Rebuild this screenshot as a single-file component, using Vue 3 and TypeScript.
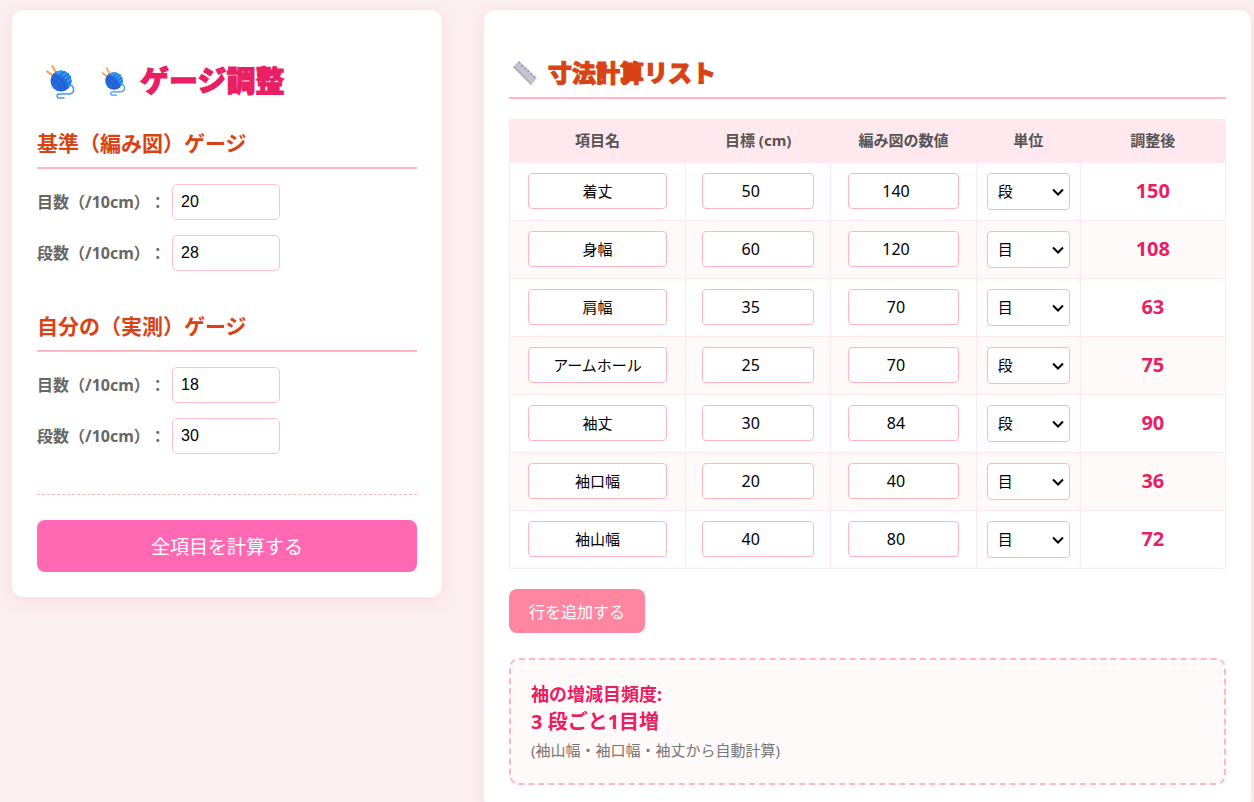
<script setup lang="ts">
import { computed, reactive, ref } from 'vue'

type Unit = '段' | '目'

interface Row {
  name: string
  target: number
  pattern: number
  unit: Unit
  result: number
}

const base = reactive({ stitches: 20, rows: 28 })
const own = reactive({ stitches: 18, rows: 30 })

const rows = ref<Row[]>([
  { name: '着丈', target: 50, pattern: 140, unit: '段', result: 150 },
  { name: '身幅', target: 60, pattern: 120, unit: '目', result: 108 },
  { name: '肩幅', target: 35, pattern: 70, unit: '目', result: 63 },
  { name: 'アームホール', target: 25, pattern: 70, unit: '段', result: 75 },
  { name: '袖丈', target: 30, pattern: 84, unit: '段', result: 90 },
  { name: '袖口幅', target: 20, pattern: 40, unit: '目', result: 36 },
  { name: '袖山幅', target: 40, pattern: 80, unit: '目', result: 72 },
])

function calculateAll(): void {
  for (const row of rows.value) {
    const ratio = row.unit === '段' ? own.rows / base.rows : own.stitches / base.stitches
    row.result = Math.round(row.pattern * ratio)
  }
}

function addRow(): void {
  rows.value.push({ name: '', target: 0, pattern: 0, unit: '目', result: 0 })
}

const sleeveInterval = computed<number>(() => {
  const find = (name: string): number => rows.value.find((r) => r.name === name)?.result ?? 0
  const change = (find('袖山幅') - find('袖口幅')) / 2
  return change > 0 ? Math.ceil(find('袖丈') / 2 / change) : 0
})
</script>

<template>
  <main class="page">
    <section class="card">
      <h1 class="title">
        <svg v-for="size in ['large', 'small']" :key="size" class="yarn" :class="size" viewBox="0 0 30 36" aria-hidden="true">
          <path d="M1.200 8.500 9 14M6.500 3 11 12" stroke="#f3a765" stroke-width="2.200" stroke-linecap="round" />
          <path d="M23.500 21.500C29 23.500 29 30.500 23 31H13c-2.500 0-2.500 4 0 4h5" fill="none" stroke="#4396e8" stroke-width="1.500" stroke-linecap="round" />
          <circle cx="15" cy="18" r="10.500" fill="#2569dc" />
          <path d="M10 9c6-4 14 0 15.500 8 0 3-1 5-2.500 7C21 17 17 12 9 10.500z" fill="#2f98f2" />
          <path d="m14 12 5-3.500M17 14.500l6-4M19.500 17.500l5.500-4M21.500 21l4-3" stroke="#1d6bd2" stroke-width="1.200" />
          <path d="M6.500 12.500c7 1 12 7 13 14.500M5 16c6 1 9.500 6 10.500 12" fill="none" stroke="#1f57c4" stroke-width="1" />
        </svg>
        <span>ゲージ調整</span>
      </h1>

      <h3 class="group-title">基準（編み図）ゲージ</h3>
      <div class="field">
        <label for="base-stitches">目数（/10cm）：</label>
        <input id="base-stitches" v-model.number="base.stitches" type="number" />
      </div>
      <div class="field">
        <label for="base-rows">段数（/10cm）：</label>
        <input id="base-rows" v-model.number="base.rows" type="number" />
      </div>

      <h3 class="group-title second">自分の（実測）ゲージ</h3>
      <div class="field">
        <label for="own-stitches">目数（/10cm）：</label>
        <input id="own-stitches" v-model.number="own.stitches" type="number" />
      </div>
      <div class="field">
        <label for="own-rows">段数（/10cm）：</label>
        <input id="own-rows" v-model.number="own.rows" type="number" />
      </div>

      <hr class="divider" />
      <button class="calculate" type="button" @click="calculateAll">全項目を計算する</button>
    </section>

    <section class="card">
      <h2 class="list-title">
        <svg class="ruler" viewBox="0 0 26 26" aria-hidden="true">
          <path d="M1 7 7 1 25 18 19 25z" fill="#c6c4cc" />
          <path d="M1 7 19 25l1-1.200L2.200 5.800z" fill="#b0adb9" />
          <path d="m8 2-1.300 1.300M11 5 9.500 6.500M14 7.800l-1.300 1.300M17 10.500l-1.500 1.500M20 13.300l-1.300 1.300M23 16.200l-1.500 1.500" stroke="#9f80dc" stroke-width="1.500" />
        </svg>
        <span>寸法計算リスト</span>
      </h2>

      <table class="sizes">
        <colgroup>
          <col class="col-name" />
          <col />
          <col />
          <col class="col-unit" />
          <col />
        </colgroup>
        <thead>
          <tr>
            <th scope="col">項目名</th>
            <th scope="col">目標 (cm)</th>
            <th scope="col">編み図の数値</th>
            <th scope="col">単位</th>
            <th scope="col">調整後</th>
          </tr>
        </thead>
        <tbody>
          <tr v-for="(row, i) in rows" :key="i">
            <td><input v-model="row.name" type="text" aria-label="項目名" /></td>
            <td><input v-model.number="row.target" type="number" aria-label="目標 (cm)" /></td>
            <td><input v-model.number="row.pattern" type="number" aria-label="編み図の数値" /></td>
            <td>
              <div class="unit">
                <select v-model="row.unit" aria-label="単位">
                  <option>段</option>
                  <option>目</option>
                </select>
                <svg viewBox="0 0 12 8" aria-hidden="true">
                  <path d="m1 1.500 5 5 5-5" fill="none" stroke="#000" stroke-width="2" />
                </svg>
              </div>
            </td>
            <td class="result">{{ row.result }}</td>
          </tr>
        </tbody>
      </table>

      <button class="add" type="button" @click="addRow">行を追加する</button>

      <div class="sleeve">
        <p class="sleeve-label">袖の増減目頻度:</p>
        <p class="sleeve-value">{{ sleeveInterval }} 段ごと1目増</p>
        <p class="sleeve-note">(袖山幅・袖口幅・袖丈から自動計算)</p>
      </div>
    </section>
  </main>
</template>

<style>
body {
  margin: 0;
  background: #fbeff1;
}
</style>

<style scoped>
.page {
  display: grid;
  grid-template-columns: 432px minmax(0, 1fr);
  align-items: start;
  gap: 40px;
  padding: 9px 2px 20px 11px;
  font-family: 'Noto Sans', 'Noto Sans CJK JP', sans-serif;
  font-size: 16px;
  text-spacing-trim: space-all;
  color: #555;
}

.page * {
  box-sizing: border-box;
}

.card {
  padding: 25px;
  background: #fff;
  border: 1px solid #ffe4e8;
  border-radius: 12px;
  box-shadow: 0 4px 15px rgba(255, 182, 193, 0.3);
}

.title {
  display: flex;
  align-items: center;
  margin: 24px 0 23px;
  padding-left: 9px;
  font-size: 29px;
  font-weight: 900;
  line-height: 44px;
  color: #e91e63;
}

.title span,
.list-title span {
  -webkit-text-stroke: 1px currentColor;
}

.yarn {
  flex: none;
}

.yarn.large {
  width: 30px;
  height: 36px;
  margin-right: 25px;
}

.yarn.small {
  width: 26px;
  height: 30px;
  margin-right: 13px;
}

.group-title {
  margin: 0 0 15px;
  padding-bottom: 7px;
  border-bottom: 2px solid #ffb6c1;
  font-size: 21px;
  font-weight: 700;
  line-height: 34px;
  color: #d84315;
}

.group-title.second {
  margin-top: 38px;
}

.field {
  display: flex;
  align-items: center;
  gap: 10px;
}

.field + .field {
  margin-top: 15px;
}

.field label {
  width: 125px;
  padding-bottom: 2px;
  font-weight: 700;
  white-space: nowrap;
  color: #666;
}

.field input {
  width: 108px;
  height: 36px;
  padding: 8px;
  border: 1px solid #ffc0cb;
  border-radius: 5px;
  background: #fff;
  font-family: 'Liberation Sans', Arial, sans-serif;
  font-size: 16px;
  color: #000;
}

.divider {
  margin: 40px 0 25px;
  border: 0;
  border-top: 1px dashed #ffb6c1;
}

button {
  border: 0;
  border-radius: 8px;
  font-family: inherit;
  color: #fff;
  cursor: pointer;
}

.calculate {
  display: block;
  width: 100%;
  height: 52px;
  background: #ff69b4;
  font-size: 19px;
}

.list-title {
  display: flex;
  align-items: center;
  gap: 10px;
  margin: 18px 0 20px;
  padding: 0 0 4px 3px;
  border-bottom: 2px solid #ffb6c1;
  font-size: 24px;
  font-weight: 900;
  line-height: 40px;
  color: #d84315;
}

.ruler {
  width: 26px;
  height: 26px;
}

.sizes {
  width: 100%;
  border-collapse: collapse;
  table-layout: fixed;
}

.col-name {
  width: 176px;
}

.col-unit {
  width: 104px;
}

th,
td {
  height: 58px;
  padding: 10px;
  border: 1px solid #ffe8ee;
  text-align: center;
  vertical-align: top;
}

th {
  height: 43px;
  padding: 10px 4px;
  background: #ffe8ee;
  font-size: 15px;
  line-height: 20px;
  font-weight: 700;
  color: #555;
}

tbody tr:nth-child(even) {
  background: #fffafa;
}

td input,
td select {
  display: block;
  margin: 0 auto;
  border: 1px solid #ffb6c1;
  border-radius: 4px;
  background: #fff;
  font-family: inherit;
  font-size: 15px;
  color: #000;
}

td input {
  width: 90%;
  height: 36px;
  padding: 6px 8px 8px;
  text-align: center;
}

td input[type='number'] {
  padding: 7px 8px;
  font-size: 16px;
}

.unit {
  display: grid;
  align-items: center;
}

.unit select,
.unit svg {
  grid-area: 1 / 1;
}

.unit select {
  width: 100%;
  height: 37px;
  padding: 0 24px 1px 10px;
  appearance: none;
}

.unit svg {
  justify-self: end;
  width: 12px;
  height: 8px;
  margin-right: 6px;
  pointer-events: none;
}

.result {
  font-size: 20px;
  font-weight: 700;
  line-height: 36px;
  color: #e91e63;
}

.add {
  display: block;
  height: 44px;
  margin: 20px 0 25px;
  padding: 0 20px;
  background: #ff85a1;
  font-size: 16px;
}

.sleeve {
  padding: 20px 20px 19px;
  border: 2px dashed #ffb6c1;
  border-radius: 10px;
  background: #fffafa;
}

.sleeve p {
  margin: 0;
  line-height: 28px;
}

.sleeve .sleeve-label {
  font-size: 18px;
  font-weight: 700;
  color: #e91e63;
}

.sleeve .sleeve-value {
  font-size: 20px;
  font-weight: 700;
  color: #e91e63;
}

.sleeve .sleeve-note {
  font-size: 15px;
  color: #777;
}

@media (max-width: 960px) {
  .page {
    grid-template-columns: minmax(0, 1fr);
  }
}
</style>
